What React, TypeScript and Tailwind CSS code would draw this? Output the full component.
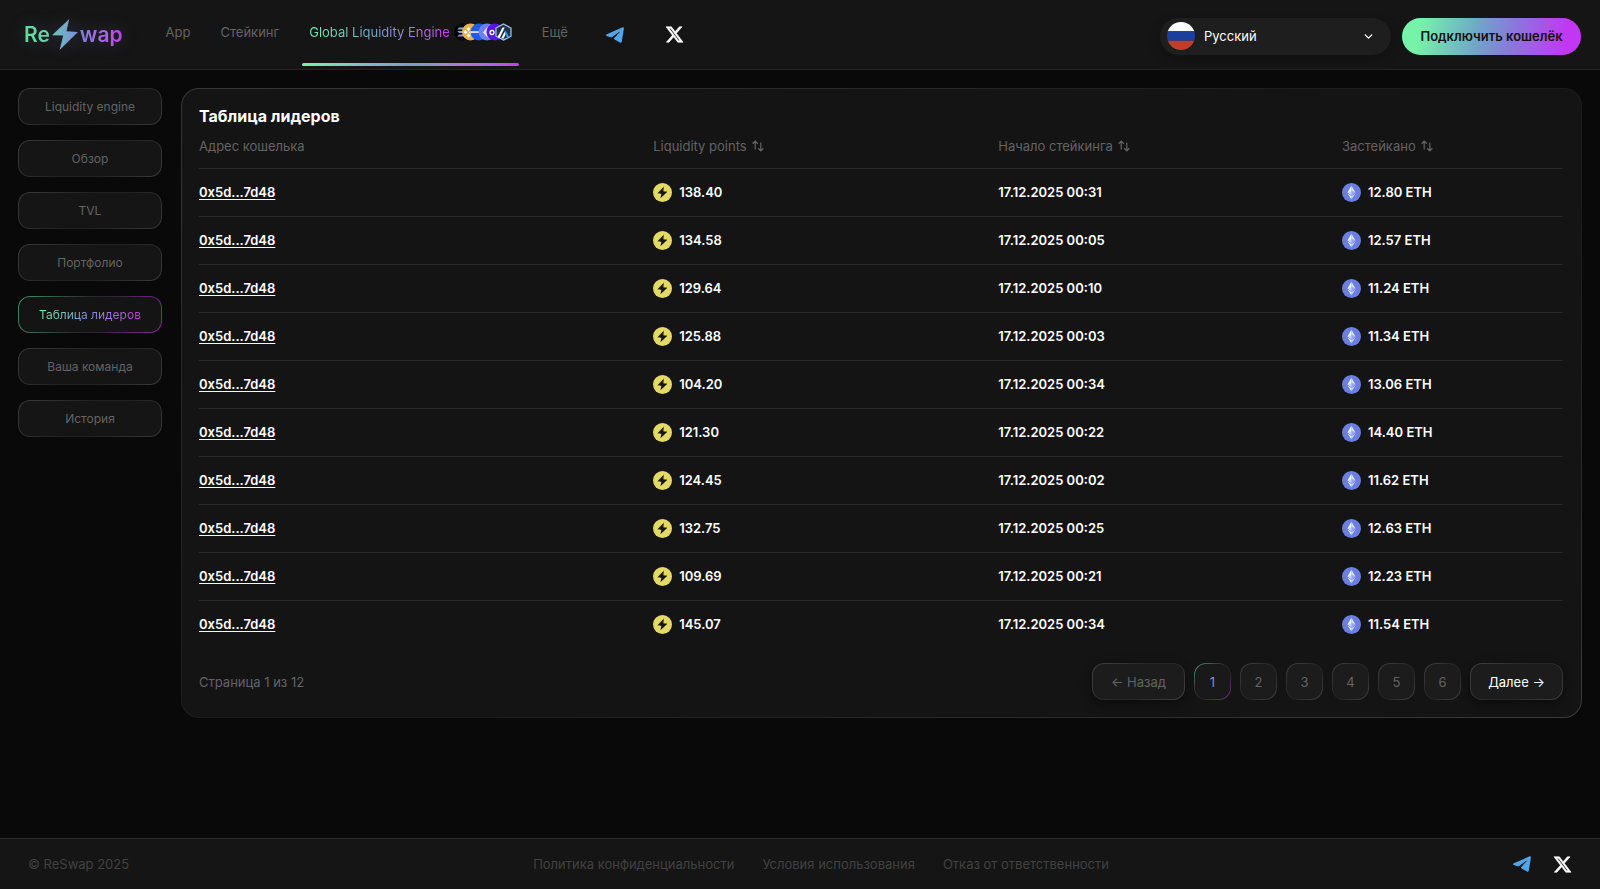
import { ChevronDown } from 'lucide-react';
import { FaXTwitter } from 'react-icons/fa6';

const pages = ['Liquidity engine', 'Обзор', 'TVL', 'Портфолио', 'Таблица лидеров', 'Ваша команда', 'История'];

const leaders = [
  ['138.40', '17.12.2025 00:31', '12.80'],
  ['134.58', '17.12.2025 00:05', '12.57'],
  ['129.64', '17.12.2025 00:10', '11.24'],
  ['125.88', '17.12.2025 00:03', '11.34'],
  ['104.20', '17.12.2025 00:34', '13.06'],
  ['121.30', '17.12.2025 00:22', '14.40'],
  ['124.45', '17.12.2025 00:02', '11.62'],
  ['132.75', '17.12.2025 00:25', '12.63'],
  ['109.69', '17.12.2025 00:21', '12.23'],
  ['145.07', '17.12.2025 00:34', '11.54'],
];

const outline =
  'border border-transparent [background:linear-gradient(#151515,#151515)_padding-box,linear-gradient(135deg,#3a3a3a,#202020_45%,#202020_60%,#3a3a3a)_border-box]';
const outlineActive =
  'border border-transparent [background:linear-gradient(#141414,#141414)_padding-box,linear-gradient(115deg,#3f8f68,#272c2c_45%,#2a202e_55%,#8a2ba0)_border-box]';
const pageOutline =
  'border border-transparent [background:linear-gradient(#1c1c1c,#1c1c1c)_padding-box,linear-gradient(135deg,#424242,#262626_45%,#262626_60%,#424242)_border-box]';
const pageOutlineActive =
  'border border-transparent [background:linear-gradient(#191919,#191919)_padding-box,linear-gradient(135deg,#4a9a76,#2a2c2e_40%,#2a222e_60%,#7c2b90)_border-box]';

function Bolt() {
  return (
    <svg viewBox="0 0 26 31" className="mx-[2px] h-[31px] w-[26px]" aria-hidden="true">
      <defs>
        <linearGradient id="bolt" x1="0" y1="0" x2="1" y2="0">
          <stop offset="0" stopColor="#6cc6b4" />
          <stop offset="1" stopColor="#7b8ee0" />
        </linearGradient>
      </defs>
      <path d="M17.3 0 0 16.2 11.200 16.6 7.6 31 26 13 14.5 12.2Z" fill="url(#bolt)" />
    </svg>
  );
}

function Telegram() {
  return (
    <svg viewBox="0 0 18 16" className="h-4 w-[18px]" aria-hidden="true">
      <path
        d="M16.600.3c.8-.3 1.500.2 1.300 1.200l-2.100 13.200c-.2 1.100-1 1.400-1.900.9l-5.300-3.200c-.8-.5-.7-1.100-.1-1.700l4.900-5.300c.5-.6.200-.8-.4-.4L6.200 10c-.6.4-1.200.4-1.900.2L.8 9C-.2 8.600-.3 7.800.8 7.300Z"
        fill="#53a5e8"
      />
    </svg>
  );
}

function ChainStack() {
  return (
    <svg viewBox="0 0 58 18" className="h-[18px] w-[58px]" aria-hidden="true">
      <defs>
        <linearGradient id="sol" x1="0" y1="1" x2="1" y2="0">
          <stop offset="0" stopColor="#b06cf0" />
          <stop offset="1" stopColor="#5fe3c0" />
        </linearGradient>
      </defs>
      <circle cx="8.5" cy="9" r="8.5" fill="#000" />
      <path d="M5 4.5h8l-1.6 2H3.4zM3.4 8h8L13 10H5zM5 11.5h8l-1.6 2H3.4z" fill="url(#sol)" />
      <circle cx="16.5" cy="9" r="8.5" fill="#e8b44a" />
      <path d="m14.5 4 2 2-2 2-2-2zm-3 3 2 2-2 2-2-2zm5 1 1.5 1.5L16.5 11 15 9.5zm-2 2.5 2 2-2 2-2-2z" fill="#fff" />
      <circle cx="25" cy="9" r="8.5" fill="#1f5bef" />
      <path d="M16.5 8.3h13v1.5h-13z" fill="#fff" />
      <circle cx="33" cy="9" r="8.5" fill="#6c80e8" />
      <path d="m33.5 3.5-4.500 6 4.500 5z" fill="#dfe5fc" />
      <circle cx="41" cy="9" r="8.5" fill="#5a14e8" />
      <circle cx="38" cy="9.5" r="2" fill="none" stroke="#fff" strokeWidth="1.3" />
      <path d="M49.500 1 57 5v8.200L49.500 17 42 13.200V5Z" fill="#213147" stroke="#9dcced" strokeWidth="1.2" />
      <path d="m43.500 14 5-9.500h2.200L45.700 15zM47.200 15.400l3.500-7 1.200 2.300-2.200 4.700z" fill="#fff" />
      <path d="m51.500 7.500 3.600 6.200-1.700 1-2.900-5.100z" fill="#28a0f0" />
    </svg>
  );
}

function PointsIcon() {
  return (
    <svg viewBox="0 0 19 19" className="size-[19px]" aria-hidden="true">
      <circle cx="9.5" cy="9.5" r="9.5" fill="#e3da66" />
      <path d="M10.900 3.800 4.500 10.300l3.900.4-.9 4.600 6.900-6.500-4.100-.6Z" fill="#151515" />
    </svg>
  );
}

function EthIcon() {
  return (
    <svg viewBox="0 0 19 19" className="size-[19px]" aria-hidden="true">
      <circle cx="9.5" cy="9.5" r="9.5" fill="#6b7fe0" />
      <path d="M9.500 2.800 5.500 9.600l4 2.400z" fill="#fff" />
      <path d="m9.500 2.800 4 6.800-4 2.400z" fill="#d5dbf8" />
      <path d="m9.500 7.800-4 1.800 4 2.400z" fill="#c9d1f6" />
      <path d="m9.500 7.800 4 1.800-4 2.400z" fill="#97a5ee" />
      <path d="m5.500 10.600 4 5.600v-3.300z" fill="#fff" />
      <path d="m13.500 10.600-4 5.600v-3.300z" fill="#c9d1f6" />
    </svg>
  );
}

function SortIcon() {
  return (
    <svg viewBox="0 0 12 12" className="h-3 w-3" fill="none" stroke="currentColor" strokeWidth="1.2" aria-hidden="true">
      <path d="M3.200 9.500V1.200M.6 3.700 3.200 1.200l2.600 2.500M8.800 2.500v8.300M6.200 8.300l2.600 2.500 2.600-2.500" />
    </svg>
  );
}

function SortHead({ label }: { label: string }) {
  return (
    <th className="pb-1 text-left font-normal">
      <button type="button" className="flex items-center gap-[5px]">
        {label}
        <SortIcon />
      </button>
    </th>
  );
}

function NavLink({ label }: { label: string }) {
  return (
    <a href="#" className="flex h-full flex-col px-[7px] pb-[6px]">
      <span className="flex flex-1 items-center">{label}</span>
    </a>
  );
}

export default function App() {
  return (
    <div className="flex min-h-screen flex-col bg-[#090909] font-['Inter','Noto_Sans',sans-serif] text-[13px] leading-5 text-[#636363]">
      <header className="flex h-[70px] items-center justify-between border-b border-[#242424] bg-[#151515] pr-[19px] pl-6">
        <div className="flex h-full items-center">
          <a href="#" aria-label="ReSwap" className="mr-9 flex items-center text-[21px] font-semibold drop-shadow-[0_0_8px_#7b8ee040]">
            <span className="bg-linear-to-r from-[#5fe096] to-[#68d0a6] bg-clip-text leading-8 text-transparent">Re</span>
            <Bolt />
            <span className="bg-linear-to-r from-[#8080dc] to-[#c838f0] bg-clip-text leading-8 text-transparent">wap</span>
          </a>
          <nav className="flex h-full gap-4">
            <NavLink label="App" />
            <NavLink label="Стейкинг" />
            <a href="#" className="flex h-full flex-col pb-[3px]" aria-current="page">
              <span className="flex flex-1 items-center gap-1 px-[7px]">
                <span className="bg-linear-to-r from-[#6ff0a6] via-[#7a9ccc] to-[#c838f0] bg-clip-text text-transparent">
                  Global Liquidity Engine
                </span>
                <ChainStack />
              </span>
              <span className="h-[3px] rounded-full bg-linear-to-r from-[#76f3a8] via-[#7a9ccc] to-[#c838f0]" />
            </a>
            <NavLink label="Ещё" />
          </nav>
          <a href="#" aria-label="Telegram" className="ml-[31px]">
            <Telegram />
          </a>
          <a href="#" aria-label="X" className="ml-[41px] text-[19px] text-white">
            <FaXTwitter stroke="currentColor" strokeWidth={16} />
          </a>
        </div>
        <div className="flex items-center gap-[11px] pt-[3px]">
          <label className="flex h-[37px] w-[231px] items-center rounded-full bg-[#1e1e1e] pr-4 pl-[7px] text-white shadow-[0_4px_12px_#00000040]">
            <svg viewBox="0 0 28 28" className="size-7" aria-hidden="true">
              <clipPath id="flag">
                <circle cx="14" cy="14" r="14" />
              </clipPath>
              <g clipPath="url(#flag)">
                <path d="M0 0h28v9.300H0z" fill="#fff" />
                <path d="M0 9.300h28v9.400H0z" fill="#1b3f9e" />
                <path d="M0 18.700h28V28H0z" fill="#c43a2c" />
              </g>
            </svg>
            <select aria-label="Язык" className="ml-[9px] flex-1 appearance-none bg-transparent outline-none">
              <option>Русский</option>
            </select>
            <ChevronDown className="pointer-events-none size-[13px]" strokeWidth={2.5} />
          </label>
          <button
            type="button"
            className="h-[37px] w-[179px] rounded-full bg-[linear-gradient(100deg,#76f3a8_10%,#6fa6c8_42%,#8b76dc_62%,#c238f2_90%)] font-semibold whitespace-nowrap text-[#101010]"
          >
            Подключить кошелёк
          </button>
        </div>
      </header>

      <div className="flex flex-1 items-start gap-[19px] px-[18px] pt-[18px] pb-[18px]">
        <aside className="flex w-36 shrink-0 flex-col gap-[15px] text-xs">
          {pages.map((page) =>
            page === 'Таблица лидеров' ? (
              <button key={page} type="button" className={`h-[37px] rounded-xl ${outlineActive}`}>
                <span className="bg-linear-to-r from-[#6ff0a6] via-[#7f8fd4] to-[#c822e8] bg-clip-text text-transparent">{page}</span>
              </button>
            ) : (
              <button key={page} type="button" className={`h-[37px] rounded-xl ${outline}`}>
                {page}
              </button>
            ),
          )}
        </aside>

        <main className="min-w-0 flex-1 rounded-[18px] border border-transparent pt-[15px] pr-[18px] pb-[17px] pl-[17px] [background:linear-gradient(#141414,#141414)_padding-box,linear-gradient(155deg,#363636,#1c1c1c_45%,#1c1c1c_60%,#3a3a3a)_border-box]">
          <h1 className="text-base leading-6 font-bold text-white">Таблица лидеров</h1>
          <table className="w-full table-fixed border-collapse">
            <colgroup>
              <col className="w-[33.3%]" />
              <col className="w-[25.3%]" />
              <col className="w-[25.2%]" />
              <col />
            </colgroup>
            <thead>
              <tr className="h-10">
                <th className="pb-1 text-left font-normal">Адрес кошелька</th>
                <SortHead label="Liquidity points" />
                <SortHead label="Начало стейкинга" />
                <SortHead label="Застейкано" />
              </tr>
            </thead>
            <tbody className="font-semibold text-white">
              {leaders.map(([points, start, staked], i) => (
                <tr key={i} className="h-12 border-t border-[#2a2a2a]">
                  <td>
                    <a href="#" className="underline underline-offset-2">
                      0x5d...7d48
                    </a>
                  </td>
                  <td>
                    <span className="flex items-center gap-[7px]">
                      <PointsIcon />
                      {points}
                    </span>
                  </td>
                  <td>{start}</td>
                  <td>
                    <span className="flex items-center gap-[7px]">
                      <EthIcon />
                      {staked} ETH
                    </span>
                  </td>
                </tr>
              ))}
            </tbody>
          </table>
          <div className="mt-[15px] flex items-center justify-between">
            <span>Страница 1 из 12</span>
            <nav aria-label="Страницы" className="flex gap-[9px]">
              <button type="button" className={`h-[37px] w-[93px] rounded-xl shadow-[0_4px_12px_#00000066] ${pageOutline}`}>
                ← Назад
              </button>
              <button type="button" aria-current="page" className={`size-[37px] rounded-xl text-[#8c84d8] ${pageOutlineActive}`}>
                1
              </button>
              {[2, 3, 4, 5, 6].map((n) => (
                <button key={n} type="button" className={`size-[37px] rounded-xl ${pageOutline}`}>
                  {n}
                </button>
              ))}
              <button type="button" className={`h-[37px] w-[93px] rounded-xl text-white shadow-[0_4px_12px_#00000066] ${pageOutline}`}>
                Далее →
              </button>
            </nav>
          </div>
        </main>
      </div>

      <footer className="flex h-[51px] items-center justify-between border-t border-[#2a2a2a] bg-[#151515] px-7 text-[#414141]">
        <span>© ReSwap 2025</span>
        <nav className="flex gap-7">
          <a href="#">Политика конфиденциальности</a>
          <a href="#">Условия использования</a>
          <a href="#">Отказ от ответственности</a>
        </nav>
        <div className="flex items-center gap-[22px]">
          <a href="#" aria-label="Telegram">
            <Telegram />
          </a>
          <a href="#" aria-label="X" className="text-[19px] text-white">
            <FaXTwitter stroke="currentColor" strokeWidth={16} />
          </a>
        </div>
      </footer>
    </div>
  );
}
